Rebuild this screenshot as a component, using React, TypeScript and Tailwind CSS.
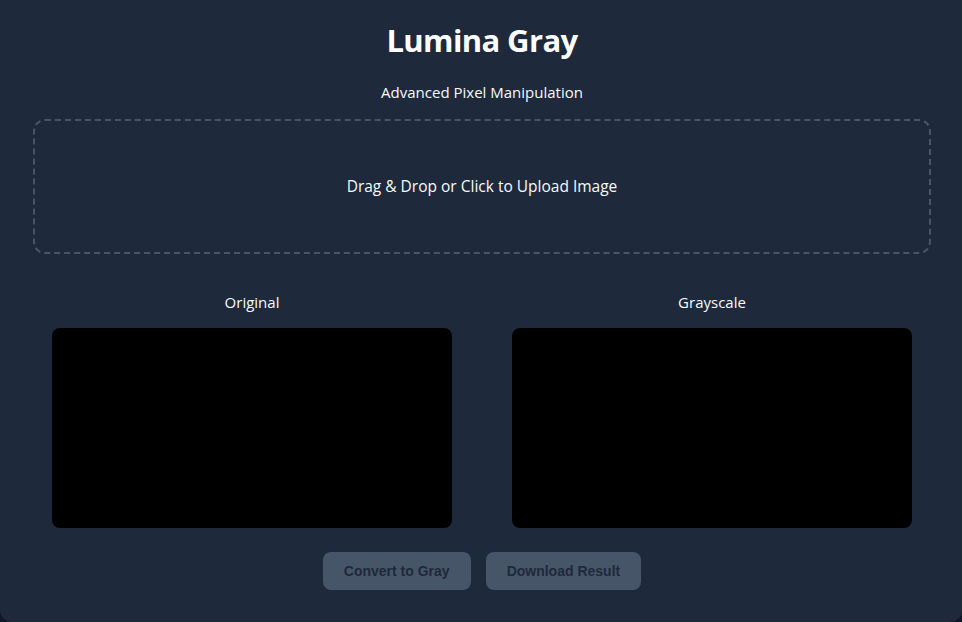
export default function App() {
  return (
    <div className="min-h-screen bg-[#0f172a]">
      <div
        className="w-[962px] rounded-b-xl bg-[#1e293b] pb-8 pl-[33px] pr-[31px] pt-[21px] text-[#f8fafc]"
        style={{ fontFamily: '"Open Sans", "Noto Sans", sans-serif' }}
      >
        <h1 className="text-center text-[31px] font-bold leading-[38px] tracking-[-0.6px] text-white">
          Lumina Gray
        </h1>
        <p className="mt-[21px] text-center text-[15px] leading-6">Advanced Pixel Manipulation</p>

        <div className="mt-[15px] flex h-[135px] items-center justify-center rounded-xl border-2 border-dashed border-[#475569]">
          <span className="text-[15.5px]">Drag &amp; Drop or Click to Upload Image</span>
        </div>

        <div className="mt-[36px] flex justify-center gap-[60px]">
          <div className="flex flex-col items-center">
            <span className="text-[15px] leading-6">Original</span>
            <div className="mt-[14px] h-[200px] w-[400px] rounded-lg bg-black" />
          </div>
          <div className="flex flex-col items-center">
            <span className="text-[15px] leading-6">Grayscale</span>
            <div className="mt-[14px] h-[200px] w-[400px] rounded-lg bg-black" />
          </div>
        </div>

        <div
          className="mt-[24px] flex justify-center gap-[15px]"
          style={{ fontFamily: '"Liberation Sans", Arial, sans-serif' }}
        >
          <button className="h-[38px] rounded-lg bg-[#475569] px-[21px] text-[14px] font-semibold text-[#1e293b]">
            Convert to Gray
          </button>
          <button className="h-[38px] rounded-lg bg-[#475569] px-[21px] text-[14px] font-semibold text-[#1e293b]">
            Download Result
          </button>
        </div>
      </div>
    </div>
  );
}
